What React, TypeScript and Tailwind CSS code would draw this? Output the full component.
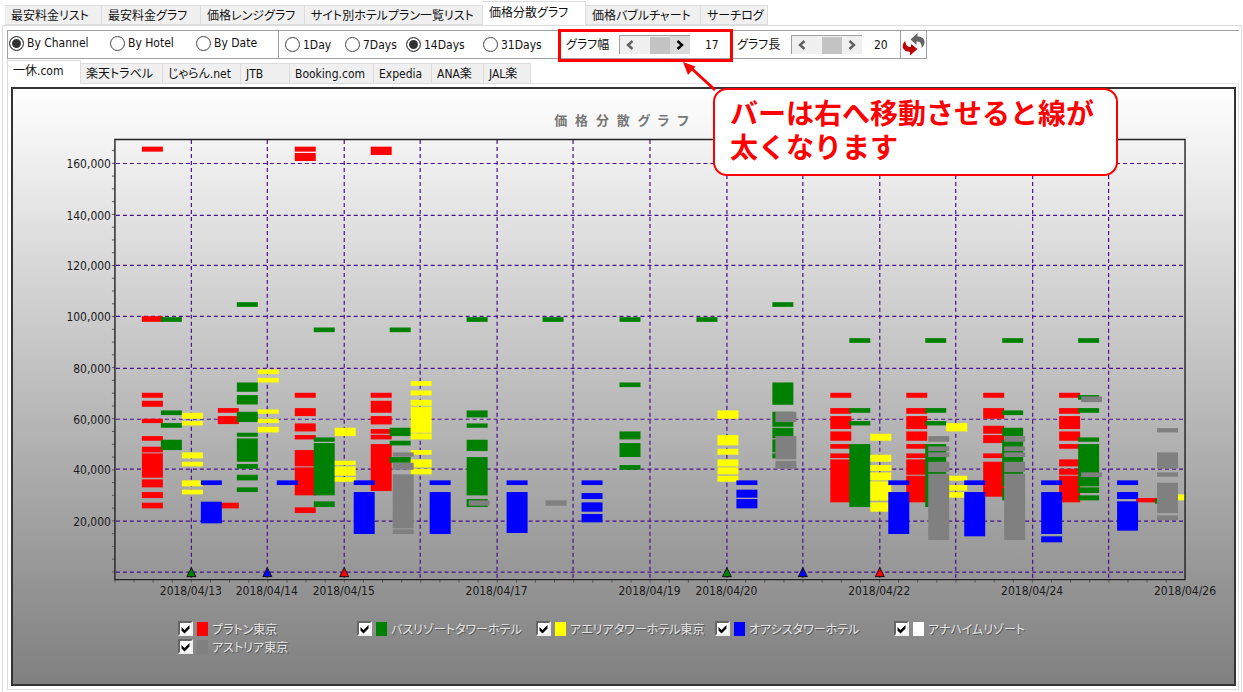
import { useState } from "react";

const mainTabs = [
  { label: "最安料金リスト", width: "w-[97px]" },
  { label: "最安料金グラフ", width: "w-[99px]" },
  { label: "価格レンジグラフ", width: "w-[104px]" },
  { label: "サイト別ホテルプラン一覧リスト", width: "w-[178px]" },
  { label: "価格分散グラフ", width: "w-[103px]" },
  { label: "価格バブルチャート", width: "w-[115px]" },
  { label: "サーチログ", width: "w-[67px]" },
];

const channelTabs = [
  { label: "一休.com", width: "w-[73px]" },
  { label: "楽天トラベル", width: "w-[82px]" },
  { label: "じゃらん.net", width: "w-[78px]" },
  { label: "JTB", width: "w-[49px]" },
  { label: "Booking.com", width: "w-[84px]" },
  { label: "Expedia", width: "w-[58px]" },
  { label: "ANA楽", width: "w-[52px]" },
  { label: "JAL楽", width: "w-[47px]" },
];

const RED = "#ff0000";
const GREEN = "#008000";
const YELLOW = "#ffff00";
const BLUE = "#0000ff";
const GREY = "#808080";

const legend = [
  { label: "プラトン東京", swatch: "bg-[#ff0000]" },
  { label: "バスリゾートタワーホテル", swatch: "bg-[#008000]" },
  { label: "アエリアタワーホテル東京", swatch: "bg-[#ffff00]" },
  { label: "オアシスタワーホテル", swatch: "bg-[#0000ff]" },
  { label: "アナハイムリゾート", swatch: "bg-white" },
  { label: "アストリア東京", swatch: "bg-[#808080]" },
];

type Column = { x: number; spans: number[][] };

// Price spans are stored in thirds of a chart unit, measured down from y = 330.
const yOf = (v: number) => 330 + v / 3;

const top = [-550, -535];
const at105 = [-83, -69];
const at99 = [-38, -24];
const at95 = [-7, 7];
const at91 = [25, 39];
const at35 = [452, 466];

const series: { color: string; columns: Column[] }[] = [
  {
    color: RED,
    columns: [
      { x: 142, spans: [top, [-41, -24], [189, 204], [213, 231], [267, 280], [319, 333], [351, 368], [371, 444], [449, 473], [487, 505], [519, 536]] },
      { x: 218, spans: [[235, 249], [259, 283], [519, 536]] },
      { x: 295, spans: [top, [-531, -507], [189, 204], [235, 259], [281, 305], [316, 329], [361, 410], [413, 497], [533, 550]] },
      { x: 371, spans: [[-550, -525], [189, 204], [213, 249], [259, 284], [298, 312], [315, 329], [343, 484]] },
      { x: 831, spans: [[189, 204], [235, 252], [259, 298], [305, 333], [343, 357], [371, 385], [389, 518]] },
      { x: 907, spans: [[189, 204], [235, 252], [259, 298], [305, 333], [343, 357], [371, 385], [389, 435], [438, 518]] },
      { x: 984, spans: [[189, 204], [235, 267], [288, 312], [316, 340], [371, 385], [396, 501]] },
      { x: 1060, spans: [[189, 204], [235, 252], [259, 298], [305, 333], [343, 357], [389, 410], [417, 435], [438, 518]] },
      { x: 1137, spans: [[505, 518]] },
    ],
  },
  {
    color: GREEN,
    columns: [
      { x: 161, spans: [at99, [242, 256], [280, 294], [330, 361]] },
      { x: 237, spans: [at105, [158, 186], [196, 224], [246, 277], [309, 321], [326, 396], [403, 417], [435, 452], [473, 487]] },
      { x: 314, spans: [at95, [323, 336], [340, 497], [515, 532]] },
      { x: 390, spans: [at95, [294, 319], [333, 347], [382, 399]] },
      { x: 467, spans: [at99, [242, 263], [281, 294], [330, 364], [382, 497], [508, 532]] },
      { x: 543, spans: [at99] },
      { x: 620, spans: [at99, [158, 172], [305, 329], [340, 382], [406, 420]] },
      { x: 697, spans: [at99] },
      { x: 773, spans: [at105, [158, 225], [246, 291], [294, 326], [329, 368], [371, 386]] },
      { x: 850, spans: [at91, [235, 249], [274, 287], [343, 532]] },
      { x: 926, spans: [at91, [235, 249], [274, 287], [343, 532]] },
      { x: 1003, spans: [at91, [242, 256], [294, 319], [330, 470], [476, 512]] },
      { x: 1079, spans: [at91, [196, 210], [235, 249], [323, 336], [343, 470], [473, 490], [497, 512]] },
      { x: 1156, spans: [[508, 522]] },
    ],
  },
  {
    color: YELLOW,
    columns: [
      { x: 182, spans: [[249, 267], [274, 287], [368, 386], [396, 410], [452, 470], [480, 494]] },
      { x: 258, spans: [[119, 133], [144, 158], [239, 252], [267, 280], [291, 308]] },
      { x: 335, spans: [[294, 319], [393, 406], [410, 438], [442, 456]] },
      { x: 411, spans: [[154, 168], [182, 197], [210, 228], [231, 309], [311, 329], [361, 375], [389, 413], [417, 434]] },
      { x: 718, spans: [[242, 267], [316, 347], [357, 375], [389, 410], [413, 434], [438, 456]] },
      { x: 871, spans: [[312, 333], [375, 396], [406, 424], [428, 452], [455, 513], [518, 546]] },
      { x: 947, spans: [[280, 305], [438, 453], [466, 483], [487, 504]] },
      { x: 1179, spans: [[494, 512]] },
    ],
  },
  {
    color: BLUE,
    columns: [
      { x: 201, spans: [at35, [516, 581]] },
      { x: 277, spans: [at35] },
      { x: 354, spans: [at35, [487, 613]] },
      { x: 430, spans: [at35, [487, 613]] },
      { x: 507, spans: [at35, [487, 610]] },
      { x: 582, spans: [at35, [490, 508], [518, 546], [553, 578]] },
      { x: 737, spans: [at35, [480, 504], [508, 536]] },
      { x: 889, spans: [at35, [487, 613]] },
      { x: 965, spans: [at35, [487, 620]] },
      { x: 1042, spans: [at35, [487, 613], [620, 638]] },
      { x: 1118, spans: [at35, [487, 508], [515, 603]] },
    ],
  },
  {
    color: GREY,
    columns: [
      { x: 393, spans: [[368, 381], [399, 420], [434, 596], [599, 613]] },
      { x: 469, spans: [[512, 528]] },
      { x: 546, spans: [[512, 528]] },
      { x: 776, spans: [[246, 277], [319, 389], [393, 417]] },
      { x: 929, spans: [[319, 336], [350, 364], [368, 382], [396, 427], [432, 631]] },
      { x: 1005, spans: [[319, 336], [350, 364], [368, 382], [396, 427], [432, 631]] },
      { x: 1082, spans: [[200, 217], [428, 442]] },
      { x: 1158, spans: [[295, 308], [368, 417], [428, 441], [459, 550], [557, 571]] },
    ],
  },
];

const gridX = [191.5, 267.5, 344.5, 420.5, 497.5, 573.5, 650.5, 727.5, 803.5, 880.5, 956.5, 1033.5, 1109.5];
const gridY = [163.5, 215.5, 265.5, 316.5, 368.5, 419.5, 469.5, 521.5, 572.5];
const yLabels = ["160,000", "140,000", "120,000", "100,000", "80,000", "60,000", "40,000", "20,000"];
const xLabels: [number, string][] = [
  [191, "2018/04/13"],
  [267, "2018/04/14"],
  [344, "2018/04/15"],
  [497, "2018/04/17"],
  [650, "2018/04/19"],
  [727, "2018/04/20"],
  [880, "2018/04/22"],
  [1033, "2018/04/24"],
  [1186, "2018/04/26"],
];
const markers: [number, string][] = [
  [191.5, GREEN],
  [267.5, BLUE],
  [344.5, RED],
  [727.5, GREEN],
  [803.5, BLUE],
  [880.5, RED],
];

function Chart() {
  return (
    <svg viewBox="13 134 1222 468" className="block w-full" role="img" aria-label="価格分散グラフ">
      <g stroke="#4b0f8f" strokeWidth="1.2" strokeDasharray="4 3">
        {gridX.map((x) => (
          <line key={x} x1={x} x2={x} y1="140" y2="579" />
        ))}
        {gridY.map((y) => (
          <line key={y} x1="116" x2="1184" y1={y} y2={y} />
        ))}
      </g>
      <g stroke="#555" strokeWidth="1">
        {Array.from({ length: 34 }, (_, i) => 572.3 - i * 12.78).map((y) => (
          <line key={y} x1="112" x2="115" y1={y} y2={y} />
        ))}
        {Array.from({ length: 56 }, (_, i) => 115 + i * 19.13).map((x) => (
          <line key={x} x1={x} x2={x} y1="580" y2="583" />
        ))}
      </g>
      {series.map((s) => (
        <g key={s.color} fill={s.color}>
          {s.columns.map((c) =>
            c.spans.map(([a, b]) => (
              <rect key={`${c.x}-${a}`} x={c.x} y={yOf(a)} width={Math.min(21, 1186 - c.x)} height={(b - a) / 3} />
            )),
          )}
        </g>
      ))}
      <path d="M115 139.5H1186V580H115Z" fill="none" stroke="#222" strokeWidth="1.4" />
      {markers.map(([x, color]) => (
        <path key={x} d={`M${x} 568L${x + 4.5} 577H${x - 4.5}Z`} fill={color} stroke="#111" strokeWidth="1" />
      ))}
      <g fill="#1a1a1a" fontSize="12">
        {yLabels.map((t, i) => (
          <text key={t} x="111" y={gridY[i] + 5} textAnchor="end">
            {t}
          </text>
        ))}
        {xLabels.map(([x, t]) => (
          <text key={t} x={x} y="595" textAnchor="middle">
            {t}
          </text>
        ))}
      </g>
    </svg>
  );
}

function Tab({ label, width, active, size, onSelect }: { label: string; width: string; active: boolean; size: "main" | "sub"; onSelect: () => void }) {
  const idleHeight = size === "main" ? "h-[20px]" : "h-[21px]";
  return (
    <button
      type="button"
      role="tab"
      aria-selected={active}
      onClick={onSelect}
      className={`${width} ${active ? "h-[24px] bg-white pb-[3px]" : `${idleHeight} border-b bg-[#f0f0f0]`} ${size === "main" ? "pl-1.5" : "pl-[5px]"} shrink-0 border-t border-r border-[#dcdcdc] text-left leading-4 whitespace-nowrap`}
    >
      {label}
    </button>
  );
}

function Radio({ name, label, width, checked, onSelect }: { name: string; label: string; width: string; checked: boolean; onSelect: () => void }) {
  return (
    <label className={`${width} flex shrink-0 items-center gap-[3px] whitespace-nowrap`}>
      <input
        type="radio"
        name={name}
        checked={checked}
        onChange={onSelect}
        className="size-[15px] shrink-0 appearance-none rounded-full border border-[#444] bg-white checked:bg-[#333] checked:shadow-[inset_0_0_0_2px_#fff]"
      />
      {label}
    </label>
  );
}

function Chevron({ dir, color }: { dir: "left" | "right"; color: string }) {
  return (
    <svg viewBox="0 0 8 10" className="h-[10px] w-2" fill="none" stroke={color} strokeWidth="2.4">
      <path d={dir === "left" ? "M6.5 1L2 5L6.5 9" : "M1.5 1L6 5L1.5 9"} />
    </svg>
  );
}

function ScrollBar({ id, max, hot }: { id: string; max: number; hot: boolean }) {
  return (
    <div className="flex h-[19px] w-[71px] shrink-0 border-t border-l border-[#a0a0a0] bg-[#f0f0f0]">
      <button type="button" aria-label="減らす" className="flex w-5 items-center justify-center">
        <Chevron dir="left" color="#606060" />
      </button>
      <input
        id={id}
        type="range"
        min={1}
        max={max}
        defaultValue={max}
        className="h-full w-[30px] appearance-none bg-transparent [&::-webkit-slider-thumb]:h-[17px] [&::-webkit-slider-thumb]:w-5 [&::-webkit-slider-thumb]:appearance-none [&::-webkit-slider-thumb]:bg-[#c4c4c4]"
      />
      <button type="button" aria-label="増やす" className={`flex w-5 items-center justify-center ${hot ? "bg-[#dadada]" : ""}`}>
        <Chevron dir="right" color={hot ? "#000" : "#606060"} />
      </button>
    </div>
  );
}

export default function App() {
  const [mainTab, setMainTab] = useState("価格分散グラフ");
  const [channel, setChannel] = useState("一休.com");
  const [mode, setMode] = useState("By Channel");
  const [days, setDays] = useState("14Days");

  return (
    <div className="min-h-screen bg-white pr-px pb-0.5 pl-0.5 font-['DejaVu_Sans_Condensed','Noto_Sans','Noto_Sans_CJK_JP',sans-serif] text-xs text-[#111]">
      <div role="tablist" className="flex h-[25px] items-end pl-[3px] font-['Noto_Sans_CJK_JP',sans-serif] [font-feature-settings:'palt']">
        {mainTabs.map((t) => (
          <Tab key={t.label} {...t} size="main" active={mainTab === t.label} onSelect={() => setMainTab(t.label)} />
        ))}
      </div>

      <div className="border border-[#dcdcdc] pt-1 pr-0.5 pb-0.5 pl-1">
        <div className="border-t border-[#a0a0a0]">
          <div className="flex h-7 w-max border-r border-b border-l border-[#a0a0a0]">
            <fieldset className="flex h-full items-center border-r border-[#a0a0a0] pb-[3px] pl-px">
              <Radio name="mode" label="By Channel" width="w-[101px]" checked={mode === "By Channel"} onSelect={() => setMode("By Channel")} />
              <Radio name="mode" label="By Hotel" width="w-[86px]" checked={mode === "By Hotel"} onSelect={() => setMode("By Hotel")} />
              <Radio name="mode" label="By Date" width="w-[82px]" checked={mode === "By Date"} onSelect={() => setMode("By Date")} />
            </fieldset>
            <fieldset className="flex items-center pl-[6px]">
              <Radio name="days" label="1Day" width="w-[60px]" checked={days === "1Day"} onSelect={() => setDays("1Day")} />
              <Radio name="days" label="7Days" width="w-[61px]" checked={days === "7Days"} onSelect={() => setDays("7Days")} />
              <Radio name="days" label="14Days" width="w-[77px]" checked={days === "14Days"} onSelect={() => setDays("14Days")} />
              <Radio name="days" label="31Days" width="w-[75px]" checked={days === "31Days"} onSelect={() => setDays("31Days")} />
            </fieldset>

            <div className="relative flex w-[175px] items-center pl-2">
              <label htmlFor="graph-width" className="w-[53px] whitespace-nowrap [font-feature-settings:'palt']">
                グラフ幅
              </label>
              <ScrollBar id="graph-width" max={17} hot />
              <output className="pl-[15px]">17</output>
              <div className="pointer-events-none absolute inset-x-0 -top-0.5 -bottom-1 z-10 border-[3px] border-[#ff0000]" />
              <svg viewBox="0 0 36 32" className="pointer-events-none absolute top-[30px] left-[124px] z-10 h-8 w-9">
                <path d="M8 6L33 29" stroke="#ff0000" strokeWidth="3" />
                <path d="M1 1L13.5 5.5L6 14Z" fill="#ff0000" />
              </svg>
              <p className="absolute top-[57px] left-[155px] z-10 h-[88px] w-[405px] rounded-[14px] border-2 border-[#ff0000] bg-white py-[5px] pl-[15px] font-['Noto_Sans_CJK_JP',sans-serif] text-[28px] leading-[34px] font-bold text-[#ff0000]">
                バーは右へ移動させると線が太くなります
              </p>
            </div>

            <div className="flex w-[167px] items-center pl-1">
              <label htmlFor="graph-length" className="w-[54px] whitespace-nowrap [font-feature-settings:'palt']">
                グラフ長
              </label>
              <ScrollBar id="graph-length" max={20} hot={false} />
              <output className="pl-3">20</output>
            </div>
            <button type="button" aria-label="リセット" className="flex w-[26px] items-center justify-center border-l border-[#a0a0a0]">
              <svg viewBox="0 0 25 25" className="size-[25px]">
                <path d="M3.5 9.5C0 14 1.500 19.500 9 19.700V23.500L16.500 17L10 12V15C6.500 15 4.500 13 4.500 9.500Z" fill="#c00000" />
                <path d="M20.500 16C26 11 24 4.500 16.500 4.500V1L9.500 7.500L15.500 13V9.500C19.500 9.500 21 12 20.500 16Z" fill="#666" />
              </svg>
            </button>
          </div>
        </div>

        <div role="tablist" className="-mb-px flex h-[25px] items-end border-l border-[#dcdcdc] [font-feature-settings:'palt']">
          {channelTabs.map((t) => (
            <Tab key={t.label} {...t} size="sub" active={channel === t.label} onSelect={() => setChannel(t.label)} />
          ))}
        </div>

        <div className="border border-[#dcdcdc] border-t-[#e8e8e8] p-[3px] pr-0.5">
          <div className="border-2 border-[#333] bg-linear-to-b from-white to-[#808080]">
            <h1 className="h-[45px] pt-6 pr-1 text-center font-['Liberation_Mono','Noto_Sans_CJK_JP',monospace] text-[13px] leading-[18px] font-bold text-[#777] [font-feature-settings:'palt']">
              価 格 分 散 グ ラ フ
            </h1>
            <Chart />
            <div className="grid h-[82px] grid-cols-[repeat(5,179px)] grid-rows-[18px_18px] pt-[18px] pl-[165px]">
              {legend.map((item) => (
                <label key={item.label} className="flex items-center whitespace-nowrap">
                  <span className="grid size-[15px] shrink-0">
                    <input
                      type="checkbox"
                      defaultChecked
                      className="peer col-start-1 row-start-1 size-[15px] appearance-none border-2 border-t-[#666] border-r-[#eee] border-b-[#eee] border-l-[#666] bg-white"
                    />
                    <svg viewBox="0 0 15 15" className="pointer-events-none invisible col-start-1 row-start-1 size-[15px] peer-checked:visible">
                      <path d="M3.500 6L6.500 9L11.500 4V7.500L6.500 12.500L3.500 9.500Z" fill="#000" />
                    </svg>
                  </span>
                  <span className={`mr-1 ml-1 h-[14px] w-[11px] shrink-0 ${item.swatch}`} />
                  <span className="font-['Noto_Sans_CJK_JP',sans-serif] leading-[18px] text-[#e6e6e6] [font-feature-settings:'palt'] [text-shadow:1px_1px_0_#555]">
                    {item.label}
                  </span>
                </label>
              ))}
            </div>
          </div>
        </div>
      </div>
    </div>
  );
}
